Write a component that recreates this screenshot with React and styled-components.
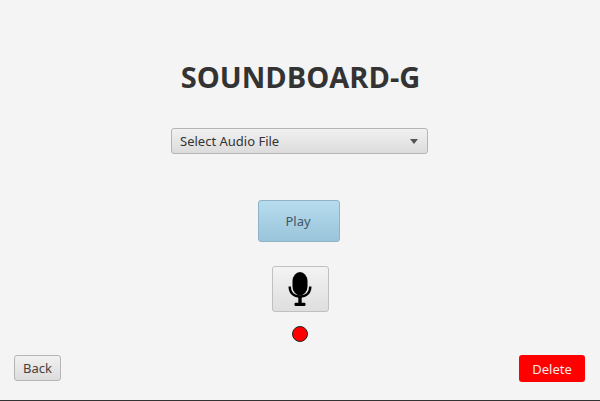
import React from "react";
import styled, { createGlobalStyle } from "styled-components";

const Global = createGlobalStyle`
  html, body {
    margin: 0;
    padding: 0;
    background: #f4f4f4;
  }
  * { box-sizing: border-box; }
`;

const Screen = styled.div`
  width: 600px;
  height: 401px;
  background: #f4f4f4;
  border-bottom: 1px solid #333;
  display: flex;
  flex-direction: column;
  align-items: center;
  font-family: "Noto Sans", "Open Sans", sans-serif;
  color: #333;
  overflow: hidden;
`;

const Title = styled.h1`
  margin: 58px 0 0 1px;
  height: 38px;
  line-height: 38px;
  font-family: "Open Sans", "Noto Sans", sans-serif;
  font-size: 29px;
  font-weight: 700;
  color: #333;
`;

const Select = styled.div`
  margin: 32px 1px 0 0;
  width: 257px;
  height: 26px;
  padding: 0 9px 0 8px;
  display: flex;
  align-items: center;
  justify-content: space-between;
  font-size: 13px;
  border: 1px solid #b5b5b5;
  border-radius: 3px;
  background: linear-gradient(#f1f1f1, #dcdcdc);
`;

const Arrow = styled.span`
  width: 0;
  height: 0;
  border-left: 4.5px solid transparent;
  border-right: 4.5px solid transparent;
  border-top: 5px solid #555;
`;

const PlayButton = styled.button`
  margin: 46px 2px 0 0;
  width: 82px;
  height: 42px;
  padding: 0 2px 0 0;
  font: 13px "Noto Sans", "Open Sans", sans-serif;
  color: #41566a;
  border: 1px solid #8fb2c6;
  border-radius: 3px;
  background: linear-gradient(#b6dcee, #9ac4da);
`;

const MicButton = styled.button`
  margin-top: 24px;
  width: 57px;
  height: 46px;
  padding: 0;
  display: flex;
  align-items: center;
  justify-content: center;
  border: 1px solid #c0c0c0;
  border-radius: 3px;
  background: linear-gradient(#f3f3f3, #dedede);
`;

const RecordDot = styled.div`
  margin-top: 14px;
  width: 16px;
  height: 16px;
  border-radius: 50%;
  background: #ff0000;
  border: 1px solid #222;
`;

const Footer = styled.div`
  align-self: stretch;
  margin-top: 13px;
  padding: 0 15px 0 14px;
  display: flex;
  justify-content: space-between;
`;

const BackButton = styled.button`
  width: 47px;
  height: 26px;
  padding: 0;
  font: 13px "Noto Sans", "Open Sans", sans-serif;
  color: #4a4038;
  border: 1px solid #b5b5b5;
  border-radius: 3px;
  background: linear-gradient(#f1f1f1, #dcdcdc);
`;

const DeleteButton = styled.button`
  width: 66px;
  height: 27px;
  padding: 0;
  font: 13px "Noto Sans", "Open Sans", sans-serif;
  color: #fbe9e9;
  border: none;
  border-radius: 3px;
  background: #ff0000;
`;

const MicIcon = () => (
  <svg width="24" height="36" viewBox="0 0 24 36">
    <rect x="4.5" y="1" width="15" height="23.5" rx="7.5" ry="9" fill="#000" />
    <path d="M1.7 15.5c0 6.500 4 10 10.300 10s10.300-3.500 10.300-10" fill="none" stroke="#000" strokeWidth="2.4" />
    <rect x="10.300" y="25" width="3.400" height="8" fill="#000" />
    <rect x="6.500" y="31.700" width="11" height="3.300" rx="1" fill="#000" />
  </svg>
);

export default function App() {
  return (
    <Screen>
      <Global />
      <Title>SOUNDBOARD-G</Title>
      <Select>
        Select Audio File
        <Arrow />
      </Select>
      <PlayButton>Play</PlayButton>
      <MicButton>
        <MicIcon />
      </MicButton>
      <RecordDot />
      <Footer>
        <BackButton>Back</BackButton>
        <DeleteButton>Delete</DeleteButton>
      </Footer>
    </Screen>
  );
}
